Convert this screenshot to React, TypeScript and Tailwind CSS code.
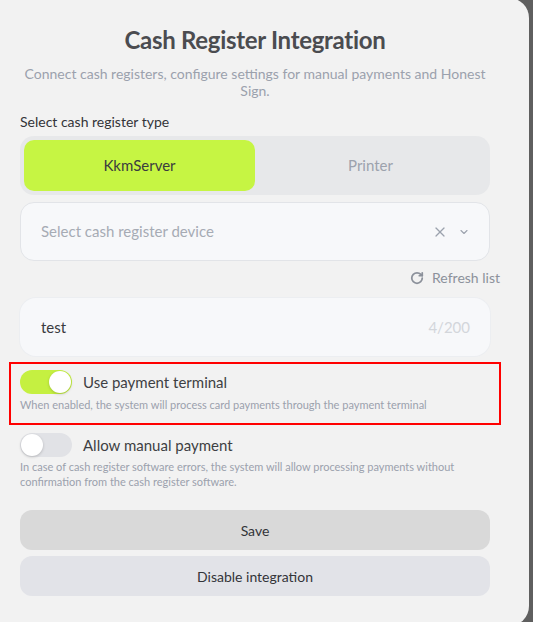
import { X, ChevronDown, RotateCw } from "lucide-react";

function Toggle({ on }: { on: boolean }) {
  return (
    <div
      className={`relative w-[52px] h-[24px] rounded-full shrink-0 ${on ? "bg-[#c5f041]" : "bg-[#e1e2e6]"}`}
    >
      <div
        className={`absolute top-[1px] w-[22px] h-[22px] rounded-full bg-white shadow-[0_1px_3px_rgba(0,0,0,0.2)] ${on ? "left-[29px]" : "left-[1px]"}`}
      />
    </div>
  );
}

export default function App() {
  return (
    <div className="w-[533px] h-[622px] bg-[#5f5f5f] overflow-hidden" style={{ fontFamily: "Lato, 'Noto Sans', sans-serif" }}>
      <div className="w-[529px] h-[628px] -mt-[2px] bg-[#f2f2f2] rounded-r-[20px] pl-5 pr-[39px] pt-[28px] flex flex-col">
        <h1 className="text-center text-[24px] leading-[28px] font-bold text-[#4b4c50] tracking-[-0.3px]">
          Cash Register Integration
        </h1>
        <p className="mt-[11px] text-center text-[14px] leading-[17px] text-[#9ba1ad] px-[2px]">
          Connect cash registers, configure settings for manual payments and Honest Sign.
        </p>
        <div className="mt-[14px] text-[14px] leading-[18px] text-[#333438]">Select cash register type</div>

        {/* type switcher */}
        <div className="mt-[5px] h-[59px] rounded-[14px] bg-[#e7e8ea] p-1 flex">
          <div className="flex-1 rounded-[10px] bg-[#c6f543] flex items-center justify-center text-[15px] text-[#3a3b3f]">
            KkmServer
          </div>
          <div className="flex-1 flex items-center justify-center text-[15px] text-[#9ca2ad]">Printer</div>
        </div>

        {/* device select */}
        <div className="mt-[7px] h-[59px] rounded-[14px] bg-[#f7f8fa] border border-[#e2e4e8] flex items-center pl-5 pr-[19px]">
          <span className="flex-1 text-[15px] text-[#a6abb4]">Select cash register device</span>
          <X className="w-[16px] h-[16px] text-[#9ca2ad]" strokeWidth={1.8} />
          <ChevronDown className="ml-[10px] w-[12px] h-[12px] text-[#9ca2ad]" strokeWidth={2.2} />
        </div>

        <div className="mt-[8px] -mr-[10px] flex justify-end items-center gap-[8px] text-[14px] leading-[18px] text-[#8c919b]">
          <RotateCw className="w-[14px] h-[14px] text-[#8c919b]" strokeWidth={3} />
          <span>Refresh list</span>
        </div>

        {/* name input */}
        <div className="mt-[11px] h-[58px] rounded-[16px] bg-[#f7f8fa] shadow-[0_0_0_1px_#eceef1] flex items-center pl-[21px] pr-[20px]">
          <span className="flex-1 text-[15px] text-[#3a3b3f]">test</span>
          <span className="text-[15px] text-[#d3d6db]">4/200</span>
        </div>

        {/* payment terminal */}
        <div className="mt-[6px] -mx-[11px] border-2 border-[#ff0000] px-[9px] pt-[6px] pb-[11px]">
          <div className="flex items-center gap-[11px]">
            <Toggle on />
            <span className="text-[15px] leading-[20px] text-[#3e3f43]">Use payment terminal</span>
          </div>
          <div className="mt-[4px] text-[11px] leading-[14px] text-[#9ba1ad]">
            When enabled, the system will process card payments through the payment terminal
          </div>
        </div>

        {/* manual payment */}
        <div className="mt-[8px]">
          <div className="flex items-center gap-[11px]">
            <Toggle on={false} />
            <span className="text-[15px] leading-[20px] text-[#3e3f43]">Allow manual payment</span>
          </div>
          <div className="mt-[2px] text-[11px] leading-[15px] text-[#9ba1ad] pr-[20px]">
            In case of cash register software errors, the system will allow processing payments without
            confirmation from the cash register software.
          </div>
        </div>

        <button className="mt-[21px] h-[40px] rounded-[12px] bg-[#d9d9d9] text-[14px] text-[#333438]">Save</button>
        <button className="mt-[6px] h-[40px] rounded-[12px] bg-[#e2e3e8] text-[14px] text-[#333438]">
          Disable integration
        </button>
      </div>
    </div>
  );
}
